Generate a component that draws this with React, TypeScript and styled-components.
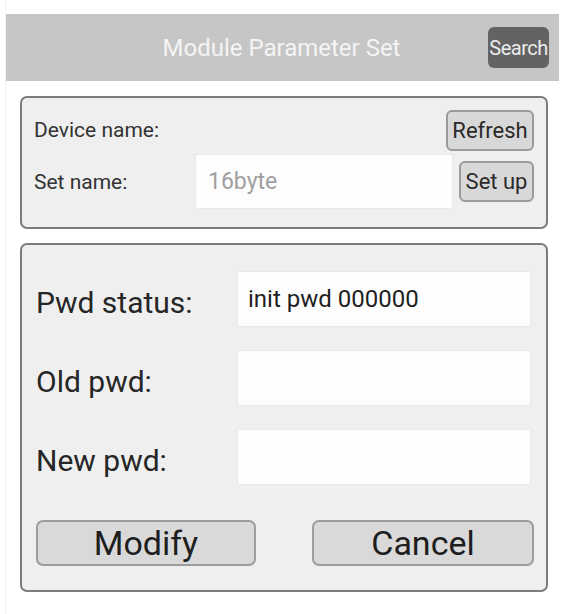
import React from "react";
import styled, { createGlobalStyle } from "styled-components";

const Global = createGlobalStyle`
  html, body { margin: 0; padding: 0; background: #ffffff; }
  body { font-family: Roboto, "Noto Sans", "Liberation Sans", sans-serif; }
`;

const Page = styled.div`
  height: 614px;
  box-sizing: border-box;
  padding-top: 14px;
  display: flex;
  flex-direction: column;
  background: #fff;
  border-left: 1px solid #f1f1f1;
  margin-left: 5px;
  width: 569px;
`;

const Header = styled.div`
  width: 553px;
  height: 67px;
  background: #c6c6c6;
  display: flex;
  align-items: center;
  justify-content: center;
  position: relative;
`;

const Title = styled.div`
  color: #f4f4f4;
  font-size: 24px;
  margin-right: 2px;
`;

const SearchButton = styled.div`
  position: absolute;
  right: 10px;
  top: 13px;
  width: 61px;
  height: 41px;
  border-radius: 6px;
  background: #636363;
  color: #ececec;
  font-size: 20px;
  display: flex;
  align-items: center;
  justify-content: center;
  letter-spacing: -0.5px;
`;

const Panel = styled.div<{ $top: number; $height: number }>`
  margin-top: ${(p) => p.$top}px;
  margin-left: 14px;
  width: 528px;
  height: ${(p) => p.$height}px;
  box-sizing: border-box;
  border: 2px solid #7c7c7c;
  border-radius: 7px;
  background: #efefef;
  display: flex;
  flex-direction: column;
`;

const TopRow = styled.div`
  display: flex;
  align-items: center;
  justify-content: space-between;
  padding: 12px 12px 0 12px;
  height: 40px;
`;

const NameRow = styled.div`
  display: flex;
  align-items: center;
  padding: 5px 12px 0 12px;
`;

const SmallLabel = styled.div<{ $width?: number }>`
  font-size: 21px;
  color: #333;
  width: ${(p) => (p.$width ? `${p.$width}px` : "auto")};
`;

const SmallButton = styled.div<{ $width: number }>`
  width: ${(p) => p.$width}px;
  height: 41px;
  box-sizing: border-box;
  border: 2px solid #9a9a9a;
  border-radius: 6px;
  background: #d8d8d8;
  color: #2a2a2a;
  font-size: 22px;
  display: flex;
  align-items: center;
  justify-content: center;
`;

const NameInput = styled.div`
  width: 256px;
  height: 53px;
  background: #fdfdfd;
  box-shadow: 0 0 0 1px #e9e9e9;
  color: #a0a0a0;
  font-size: 23px;
  display: flex;
  align-items: center;
  padding-left: 12px;
  box-sizing: border-box;
  margin-right: 7px;
`;

const PwdRows = styled.div`
  display: flex;
  flex-direction: column;
  gap: 25px;
  padding: 27px 16px 0 14px;
`;

const PwdRow = styled.div`
  display: flex;
  align-items: center;
`;

const BigLabel = styled.div`
  width: 202px;
  font-size: 30px;
  color: #262626;
  padding-top: 7px;
`;

const PwdInput = styled.div`
  width: 292px;
  height: 54px;
  background: #fdfdfd;
  box-shadow: 0 0 0 1px #e8e8e8;
  color: #1f1f1f;
  font-size: 24px;
  display: flex;
  align-items: center;
  padding-left: 10px;
  box-sizing: border-box;
`;

const ButtonRow = styled.div`
  display: flex;
  justify-content: space-between;
  padding: 36px 12px 0 14px;
`;

const BigButton = styled.div<{ $width: number }>`
  width: ${(p) => p.$width}px;
  height: 46px;
  box-sizing: border-box;
  border: 2px solid #9c9c9c;
  border-radius: 7px;
  background: #d9d9d9;
  color: #1e1e1e;
  font-size: 34px;
  display: flex;
  align-items: center;
  justify-content: center;
`;

export default function App() {
  return (
    <>
      <Global />
      <Page>
        <Header>
          <Title>Module Parameter Set</Title>
          <SearchButton>Search</SearchButton>
        </Header>
        <Panel $top={15} $height={133}>
          <TopRow>
            <SmallLabel>Device name:</SmallLabel>
            <SmallButton $width={88}>Refresh</SmallButton>
          </TopRow>
          <NameRow>
            <SmallLabel $width={162}>Set name:</SmallLabel>
            <NameInput>16byte</NameInput>
            <SmallButton $width={75}>Set up</SmallButton>
          </NameRow>
        </Panel>
        <Panel $top={14} $height={349}>
          <PwdRows>
            <PwdRow>
              <BigLabel>Pwd status:</BigLabel>
              <PwdInput>init pwd 000000</PwdInput>
            </PwdRow>
            <PwdRow>
              <BigLabel>Old pwd:</BigLabel>
              <PwdInput />
            </PwdRow>
            <PwdRow>
              <BigLabel>New pwd:</BigLabel>
              <PwdInput />
            </PwdRow>
          </PwdRows>
          <ButtonRow>
            <BigButton $width={220}>Modify</BigButton>
            <BigButton $width={222}>Cancel</BigButton>
          </ButtonRow>
        </Panel>
      </Page>
    </>
  );
}
